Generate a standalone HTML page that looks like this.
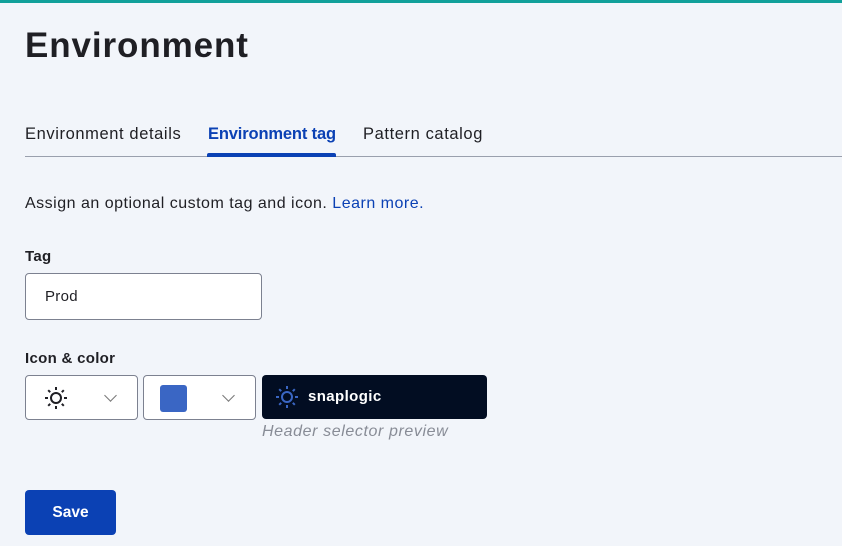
<!DOCTYPE html>
<html><head><style>
body{margin:0;width:842px;height:546px;background:#f2f5fa;font-family:"Liberation Sans",sans-serif;color:#1f1f24;position:relative;overflow:hidden}
.a{position:absolute}
.top{left:0;top:0;width:842px;height:3px;background:#11a09a}
h1{position:absolute;left:25px;top:26px;margin:0;font-size:35px;font-weight:bold;letter-spacing:0.9px}
.tab{position:absolute;top:125px;font-size:16.5px;letter-spacing:0.6px}
.line{left:25px;top:156px;width:817px;height:1px;background:#9aa0ad}
.ul{left:207px;top:153px;width:129px;height:4px;background:#0b41b4;border-radius:2px 2px 0 0}
.box{position:absolute;background:#fff;border:1px solid #7c8190;border-radius:4px;box-sizing:border-box}
.chev{position:absolute;width:8px;height:8px;border-right:1.3px solid #777;border-bottom:1.3px solid #777;transform:rotate(45deg)}
</style></head><body>
<div class="a top"></div>
<h1>Environment</h1>
<div class="tab" style="left:25px">Environment details</div>
<div class="tab" style="left:208px;color:#0b41b4;font-weight:bold;letter-spacing:-0.15px">Environment tag</div>
<div class="tab" style="left:363px">Pattern catalog</div>
<div class="a line"></div>
<div class="a ul"></div>
<div class="a" style="left:25px;top:195px;font-size:16px;letter-spacing:0.5px">Assign an optional custom tag and icon. <span style="color:#0b41b4">Learn more.</span></div>
<div class="a" style="left:25px;top:248px;font-size:15px;font-weight:bold;letter-spacing:0.3px">Tag</div>
<div class="box" style="left:25px;top:273px;width:237px;height:47px"><span class="a" style="left:19px;top:14px;font-size:15px;letter-spacing:0.3px">Prod</span></div>
<div class="a" style="left:25px;top:350px;font-size:15px;font-weight:bold;letter-spacing:0.3px">Icon &amp; color</div>
<div class="box" style="left:25px;top:375px;width:113px;height:45px">
<svg class="a" style="left:18px;top:10px" width="24" height="24" viewBox="0 0 24 24" fill="none" stroke="#1f1f24" stroke-width="2"><circle cx="12" cy="12" r="5"/><path d="M12 1v3M12 20v3M1 12h3M20 12h3M4.2 4.2l2 2M17.8 17.8l2 2M4.2 19.8l2-2M17.8 6.2l2-2"/></svg>
<div class="chev" style="left:80px;top:15px"></div></div>
<div class="box" style="left:143px;top:375px;width:113px;height:45px">
<div class="a" style="left:16px;top:9px;width:27px;height:27px;background:#3a66c4;border-radius:3px"></div>
<div class="chev" style="left:80px;top:15px"></div></div>
<div class="a" style="left:262px;top:375px;width:225px;height:44px;background:#020d22;border-radius:4px">
<svg class="a" style="left:13px;top:10px" width="24" height="24" viewBox="0 0 24 24" fill="none" stroke="#3a66c4" stroke-width="2"><circle cx="12" cy="12" r="5"/><path d="M12 1v3M12 20v3M1 12h3M20 12h3M4.2 4.2l2 2M17.8 17.8l2 2M4.2 19.8l2-2M17.8 6.2l2-2"/></svg>
<span class="a" style="left:46px;top:13px;color:#fff;font-weight:bold;font-size:15px;letter-spacing:0.4px">snaplogic</span></div>
<div class="a" style="left:262px;top:423px;font-size:16px;font-style:italic;color:#888c96;letter-spacing:0.6px">Header selector preview</div>
<div class="a" style="left:25px;top:490px;width:91px;height:45px;background:#0b41b4;border-radius:4px;color:#fff;font-weight:bold;font-size:15.5px;text-align:center;line-height:45px">Save</div>
</body></html>
